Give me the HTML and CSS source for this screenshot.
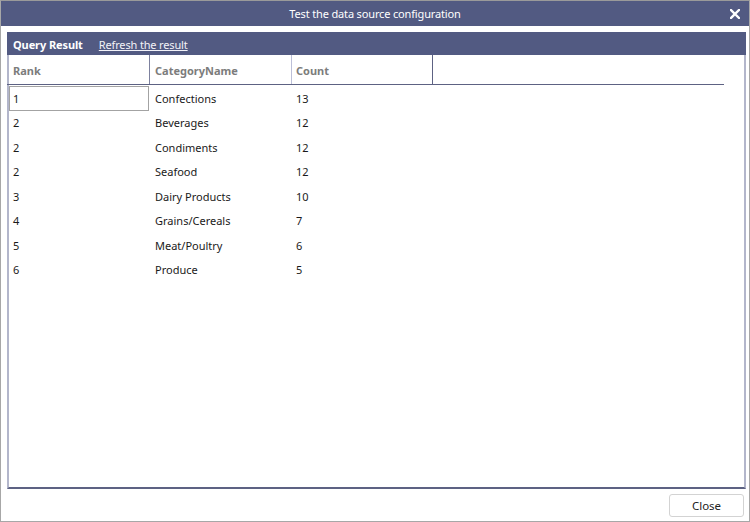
FILE: index.html
```html
<!DOCTYPE html>
<html>
<head>
<meta charset="utf-8">
<link rel="stylesheet" href="styles.css">
</head>
<body>
<div class="window">
  <div class="titlebar">
    <span class="title">Test the data source configuration</span>
    <svg class="x" width="10" height="10" viewBox="0 0 10 10"><path d="M1 1 L9 9 M9 1 L1 9" stroke="#ffffff" stroke-width="2.4" stroke-linecap="square"/></svg>
  </div>
  <div class="panel">
    <div class="panel-head">
      <span class="ph-title">Query Result</span>
      <span class="ph-link">Refresh the result</span>
    </div>
    <div class="grid">
      <div class="row head">
        <div class="cell c1">Rank</div>
        <div class="cell c2 sep-a">CategoryName</div>
        <div class="cell c3 sep-b">Count</div>
        <div class="cell c4 sep-c"></div>
      </div>
      <div class="row"><div class="cell c1 sel">1</div><div class="cell c2">Confections</div><div class="cell c3">13</div></div>
      <div class="row"><div class="cell c1">2</div><div class="cell c2">Beverages</div><div class="cell c3">12</div></div>
      <div class="row"><div class="cell c1">2</div><div class="cell c2">Condiments</div><div class="cell c3">12</div></div>
      <div class="row"><div class="cell c1">2</div><div class="cell c2">Seafood</div><div class="cell c3">12</div></div>
      <div class="row"><div class="cell c1">3</div><div class="cell c2">Dairy Products</div><div class="cell c3">10</div></div>
      <div class="row"><div class="cell c1">4</div><div class="cell c2">Grains/Cereals</div><div class="cell c3">7</div></div>
      <div class="row"><div class="cell c1">5</div><div class="cell c2">Meat/Poultry</div><div class="cell c3">6</div></div>
      <div class="row"><div class="cell c1">6</div><div class="cell c2">Produce</div><div class="cell c3">5</div></div>
    </div>
  </div>
  <div class="footer">
    <button class="btn">Close</button>
  </div>
</div>
</body>
</html>
```
FILE: styles.css
```css
html, body {
  margin: 0;
  padding: 0;
  background: #ffffff;
}
body {
  width: 750px;
  height: 522px;
  overflow: hidden;
  font-family: "Noto Sans", "Open Sans", sans-serif;
  font-size: 11px;
  color: #1a1a1a;
}
.window {
  box-sizing: border-box;
  width: 750px;
  height: 522px;
  border: 1px solid #a7a7a7;
  border-top-color: #9a9a9a;
  display: flex;
  flex-direction: column;
  background: #ffffff;
}
.titlebar {
  height: 25px;
  background: #525a82;
  color: #ffffff;
  display: flex;
  align-items: center;
  justify-content: center;
  position: relative;
  font-size: 11px;
  letter-spacing: -0.15px;
  flex: none;
}
.title {
  margin-top: -1px;
}
.x {
  position: absolute;
  right: 9px;
  top: 8px;
}
.panel {
  margin: 6px 3px 0 6px;
  height: 457px;
  box-sizing: border-box;
  border-left: 2px solid #b3b6cb;
  border-right: 2px solid #b3b6cb;
  border-bottom: 2px solid #5d6283;
  display: flex;
  flex-direction: column;
  flex: none;
}
.panel-head {
  height: 23px;
  box-sizing: border-box;
  padding-top: 1px;
  background: #525a82;
  margin: 0 -2px;
  padding-left: 6px;
  display: flex;
  align-items: center;
  color: #ffffff;
  flex: none;
}
.ph-title {
  font-weight: bold;
  letter-spacing: -0.1px;
}
.ph-link {
  margin-left: 16px;
  text-decoration: underline;
  color: #f2f2f8;
  letter-spacing: -0.15px;
}
.grid {
  width: 715px;
  display: flex;
  flex-direction: column;
}
.row {
  display: flex;
  height: 24.5px;
  align-items: stretch;
}
.row.head {
  height: 30px;
  border-bottom: 1px solid #5d6283;
  box-sizing: border-box;
  color: #7c7c7c;
  font-weight: bold;
  margin-left: -2px;
  padding-left: 2px;
  margin-bottom: 1px;
}
.cell {
  box-sizing: border-box;
  display: flex;
  align-items: center;
  padding-left: 4px;
  white-space: nowrap;
}
.c1 { width: 140px; }
.c2 { width: 142px; padding-left: 6px; }
.c3 { width: 141px; padding-left: 5px; }
.c4 { flex: 1; }
.head .cell { padding-top: 2px; }
.sep-a { border-left: 1px solid #7d819e; }
.sep-b { border-left: 1px solid #bcbfd8; }
.sep-c { border-left: 1px solid #5d6283; }
.head .c2 { padding-left: 5px; }
.head .c3 { padding-left: 4px; }
.sel {
  border: 1px solid #a3a3a3;
  padding-left: 3px;
}
.footer {
  flex: 1;
  display: flex;
  justify-content: flex-end;
  align-items: flex-start;
  padding: 5px 5px 0 0;
}
.btn {
  width: 75px;
  height: 23px;
  background: #ffffff;
  border: 1px solid #d3d3d3;
  border-radius: 3px;
  font-family: "Noto Sans", "Open Sans", sans-serif;
  font-size: 11.5px;
  color: #222222;
  padding: 0;
}
```
